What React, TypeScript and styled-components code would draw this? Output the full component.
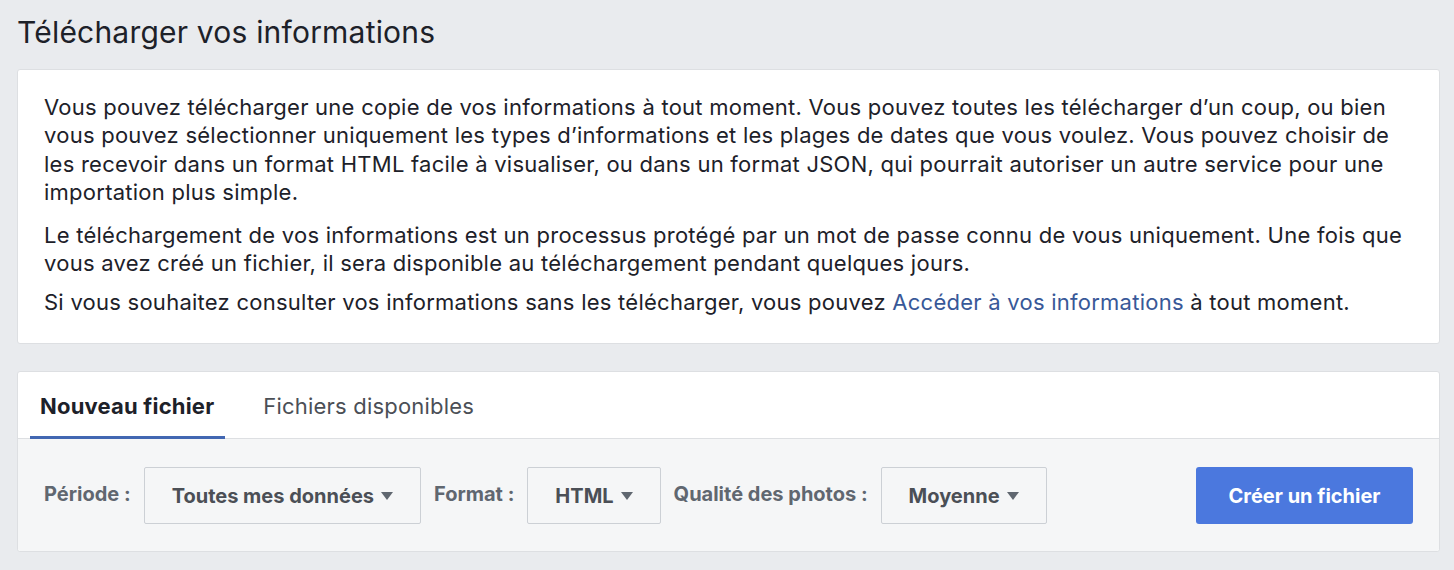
import styled, { createGlobalStyle } from "styled-components";

const GlobalStyle = createGlobalStyle`
  html, body {
    margin: 0;
    padding: 0;
    background: #e9ebee;
  }
  body {
    font-family: Inter, "Noto Sans", "Liberation Sans", sans-serif;
    color: #1d2129;
  }
`;

const Page = styled.div`
  padding: 14px 14px 20px 17px;
`;

const Title = styled.h1`
  margin: 0 0 19px;
  font-size: 30px;
  line-height: 36px;
  font-weight: 400;
  letter-spacing: 0.2px;
  color: #1d2129;
`;

const Card = styled.div`
  background: #fff;
  border: 1px solid #dddfe2;
  border-radius: 3px;
`;

const Intro = styled(Card)`
  padding: 23px 27px 27px 26px;
  margin-bottom: 27px;
`;

const Para = styled.p<{ $gap?: number }>`
  margin: 0 0 ${(p) => p.$gap ?? 0}px;
  font-size: 22px;
  line-height: 28.3px;
  letter-spacing: 0.25px;
  white-space: nowrap;
`;

const Link = styled.a`
  color: #385898;
  text-decoration: none;
`;

const Tabs = styled.div`
  display: flex;
  gap: 28px;
  padding: 0 0 0 12px;
  border-bottom: 1px solid #dddfe2;
  height: 66px;
`;

const Tab = styled.div<{ $active?: boolean }>`
  display: flex;
  align-items: center;
  padding: 3px 11px 0 10px;
  font-size: 22px;
  letter-spacing: 0.2px;
  font-weight: ${(p) => (p.$active ? 700 : 400)};
  color: ${(p) => (p.$active ? "#1d2129" : "#4b4f56")};
  border-bottom: 3px solid ${(p) => (p.$active ? "#4267b2" : "transparent")};
  margin-bottom: -1px;
`;

const Toolbar = styled.div`
  display: flex;
  align-items: center;
  gap: 13px;
  height: 111px;
  padding: 1px 26px 0;
  background: #f5f6f7;
  border-radius: 0 0 3px 3px;
`;

const Label = styled.span`
  font-size: 20px;
  font-weight: 700;
  color: #606770;
  margin-top: -3px;
`;

const Select = styled.div`
  display: flex;
  align-items: center;
  gap: 7px;
  height: 57px;
  box-sizing: border-box;
  padding: 0 27px;
  border: 1px solid #ccd0d5;
  border-radius: 2px;
  background: #f5f6f7;
  font-size: 20px;
  font-weight: 700;
  color: #4b4f56;
`;

const Caret = styled.span`
  width: 0;
  height: 0;
  border-left: 6.5px solid transparent;
  border-right: 6.5px solid transparent;
  border-top: 8px solid #606770;
  margin-top: 1px;
`;

const Spacer = styled.div`
  flex: 1;
`;

const Button = styled.button`
  height: 57px;
  width: 217px;
  border: none;
  border-radius: 3px;
  background: #4b78de;
  color: #fff;
  font-family: inherit;
  font-size: 20px;
  font-weight: 700;
  cursor: pointer;
`;

function Dropdown({ value }: { value: string }) {
  return (
    <Select>
      {value}
      <Caret />
    </Select>
  );
}

export default function App() {
  return (
    <>
      <GlobalStyle />
      <Page>
        <Title>Télécharger vos informations</Title>
        <Intro>
          <Para $gap={15}>
            Vous pouvez télécharger une copie de vos informations à tout moment. Vous pouvez toutes les télécharger d’un coup, ou bien
            <br />
            vous pouvez sélectionner uniquement les types d’informations et les plages de dates que vous voulez. Vous pouvez choisir de
            <br />
            les recevoir dans un format HTML facile à visualiser, ou dans un format JSON, qui pourrait autoriser un autre service pour une
            <br />
            importation plus simple.
          </Para>
          <Para $gap={10}>
            Le téléchargement de vos informations est un processus protégé par un mot de passe connu de vous uniquement. Une fois que
            <br />
            vous avez créé un fichier, il sera disponible au téléchargement pendant quelques jours.
          </Para>
          <Para>
            Si vous souhaitez consulter vos informations sans les télécharger, vous pouvez <Link href="#">Accéder à vos informations</Link> à tout moment.
          </Para>
        </Intro>
        <Card>
          <Tabs>
            <Tab $active>Nouveau fichier</Tab>
            <Tab>Fichiers disponibles</Tab>
          </Tabs>
          <Toolbar>
            <Label>Période :</Label>
            <Dropdown value="Toutes mes données" />
            <Label>Format :</Label>
            <Dropdown value="HTML" />
            <Label>Qualité des photos :</Label>
            <Dropdown value="Moyenne" />
            <Spacer />
            <Button>Créer un fichier</Button>
          </Toolbar>
        </Card>
      </Page>
    </>
  );
}
